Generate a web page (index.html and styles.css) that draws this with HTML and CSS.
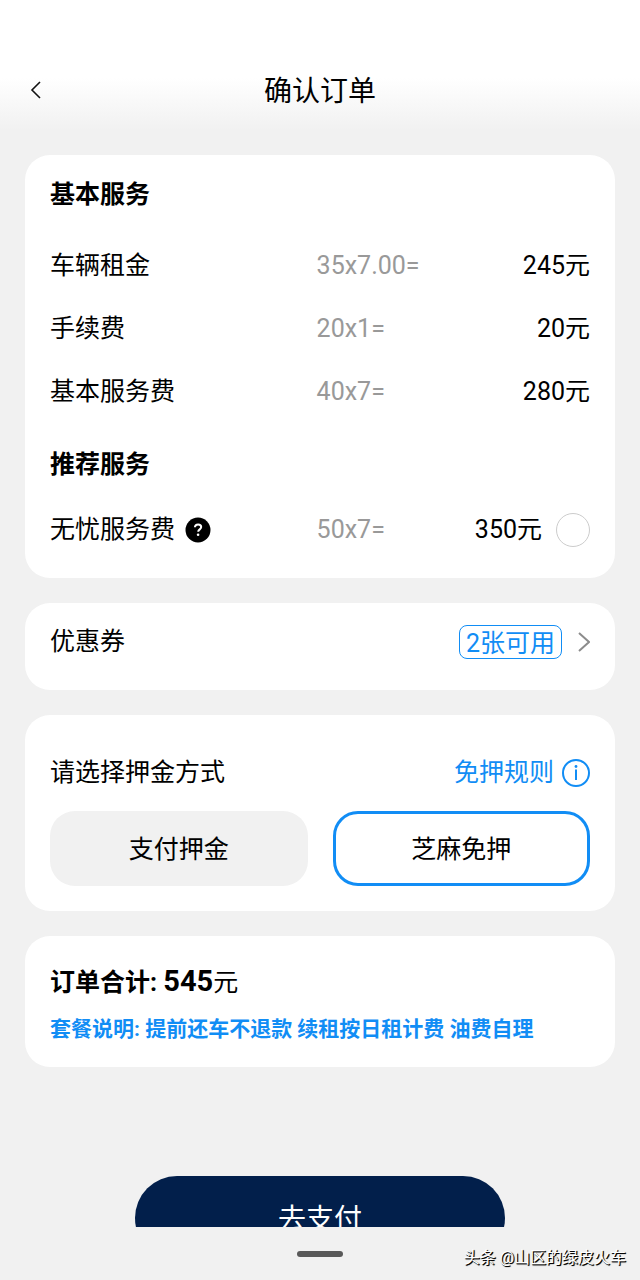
FILE: index.html
```html
<!DOCTYPE html>
<html lang="zh-CN">
<head>
  <meta charset="UTF-8">
  <meta name="viewport" content="width=device-width, initial-scale=1">
  <title>确认订单</title>
  <link rel="stylesheet" href="styles.css">
</head>
<body>
  <header class="header">
    <button class="back" type="button" aria-label="返回">
      <svg width="12" height="18" viewBox="0 0 12 18" fill="none" stroke="#111" stroke-width="1.6"><path d="M10 1 2 9l8 8"/></svg>
    </button>
    <h1>确认订单</h1>
  </header>

  <main class="content">
    <section class="card services">
      <h2>基本服务</h2>
      <table class="fees">
        <tr><th scope="row">车辆租金</th><td class="calc">35x7.00=</td><td class="amount">245元</td></tr>
        <tr><th scope="row">手续费</th><td class="calc">20x1=</td><td class="amount">20元</td></tr>
        <tr><th scope="row">基本服务费</th><td class="calc">40x7=</td><td class="amount">280元</td></tr>
      </table>
      <h2>推荐服务</h2>
      <table class="fees">
        <tr>
          <th scope="row">
            <div class="name">
              无忧服务费
              <button class="help" type="button" aria-label="服务说明">
                <svg width="26" height="26" viewBox="0 0 26 26" fill="none"><circle cx="13" cy="13" r="12.5" fill="#000"/><path d="M9.9 10.3c.1-1.8 1.4-2.9 3.2-2.9s3.1 1.1 3.1 2.7c0 2.3-3 2.3-3 4.7" stroke="#fff" stroke-width="2"/><circle cx="13.1" cy="17.8" r="1.3" fill="#fff"/></svg>
              </button>
            </div>
          </th>
          <td class="calc">50x7=</td>
          <td class="amount">
            <label class="pick">350元<input type="radio" name="care" aria-label="选择无忧服务费"></label>
          </td>
        </tr>
      </table>
    </section>

    <section class="card coupon">
      <span>优惠券</span>
      <a class="coupon-link" href="#">
        <span class="tag">2张可用</span>
        <svg width="14" height="22" viewBox="0 0 14 22" fill="none" stroke="#8c8c8c" stroke-width="2"><path d="m3 2 10 9-10 9"/></svg>
      </a>
    </section>

    <section class="card deposit">
      <div class="deposit-head">
        <span>请选择押金方式</span>
        <a class="rules" href="#">
          免押规则
          <svg width="28" height="28" viewBox="0 0 28 28" fill="none" stroke="#118df5" stroke-width="2"><circle cx="14" cy="14" r="13"/><path d="M14 10.5V21"/><circle cx="14" cy="7.5" r="1.4" fill="#118df5" stroke="none"/></svg>
        </a>
      </div>
      <div class="options">
        <button class="option" type="button">支付押金</button>
        <button class="option selected" type="button">芝麻免押</button>
      </div>
    </section>

    <section class="card total">
      <p class="sum"><b>订单合计: <span class="price">545</span></b>元</p>
      <p class="note">套餐说明: 提前还车不退款 续租按日租计费 油费自理</p>
    </section>

    <button class="pay" type="button">去支付</button>
  </main>

  <footer class="navbar">
    <span class="handle"></span>
    <span class="watermark">头条 @山区的绿皮火车</span>
  </footer>
</body>
</html>
```
FILE: styles.css
```css
* {
  box-sizing: border-box;
}

body {
  margin: 0;
  height: 100vh;
  display: flex;
  flex-direction: column;
  overflow: hidden;
  background: #f1f1f1;
  color: #000;
  font-family: Roboto, "Noto Sans CJK SC", sans-serif;
  font-size: 25px;
  line-height: 36px;
}

button {
  font: inherit;
  color: inherit;
  border: none;
  padding: 0;
  background: none;
  cursor: pointer;
}

a {
  color: #118df5;
  text-decoration: none;
}

svg {
  display: block;
}

.header {
  flex: none;
  display: grid;
  grid-template-columns: 60px 1fr 60px;
  align-items: center;
  padding-top: 70px;
  padding-bottom: 20px;
  background: linear-gradient(#fff 60%, #f1f1f1 100%);
}

.back {
  display: flex;
  justify-content: flex-end;
  padding: 10px 18px;
}

h1 {
  margin: 0;
  padding-top: 4px;
  font-size: 28px;
  font-weight: 400;
  line-height: 36px;
  text-align: center;
}

.content {
  flex: 1;
  min-height: 0;
  overflow: hidden;
  display: flex;
  flex-direction: column;
  gap: 25px;
  padding: 25px 25px 0;
}

.card {
  flex: none;
  padding: 25px;
  border-radius: 25px;
  background: #fff;
}

.services {
  padding-top: 20px;
  padding-bottom: 17px;
}

h2 {
  margin: 0 0 19px;
  font-size: 25px;
  font-weight: 700;
  line-height: 40px;
}

.fees {
  width: 100%;
  table-layout: fixed;
  border-collapse: collapse;
}

.fees + h2 {
  margin-top: 22px;
  margin-bottom: 13px;
}

.fees th,
.fees td {
  height: 63px;
  padding: 0;
  font-weight: 400;
  text-align: left;
}

.fees th {
  width: 49%;
}

.fees .calc {
  padding-left: 2px;
  color: #999;
}

.fees .amount {
  text-align: right;
}

.name,
.pick {
  display: flex;
  align-items: center;
  gap: 10px;
}

.pick {
  justify-content: flex-end;
  gap: 14px;
}

.pick input {
  appearance: none;
  width: 34px;
  height: 34px;
  margin: 0;
  border: 1px solid #ccc;
  border-radius: 50%;
}

.pick input:checked {
  border: 10px solid #118df5;
}

.coupon,
.coupon-link,
.deposit-head,
.rules {
  display: flex;
  align-items: center;
}

.coupon,
.deposit-head {
  justify-content: space-between;
}

.coupon {
  padding-top: 21px;
  padding-bottom: 30px;
}

.coupon-link {
  gap: 14px;
}

.tag {
  padding: 3px 6px 0;
  border: 1px solid #118df5;
  border-radius: 8px;
  line-height: 29px;
}

.deposit {
  padding-top: 40px;
}

.rules {
  gap: 8px;
}

.options {
  display: grid;
  grid-template-columns: 1fr 1fr;
  gap: 25px;
  margin-top: 20px;
}

.option {
  height: 75px;
  padding-top: 2px;
  border-radius: 25px;
  background: #f1f1f1;
}

.option.selected {
  border: 3px solid #118df5;
  background: #fff;
}

.total {
  padding-top: 27px;
  padding-bottom: 20px;
}

.total p {
  margin: 0;
}

.price {
  font-size: 29px;
}

.total .note {
  margin-top: 10px;
  color: #118df5;
  font-size: 21px;
  font-weight: 700;
}

.pay {
  flex: none;
  align-self: center;
  width: 370px;
  height: 84px;
  margin-top: 84px;
  padding-top: 4px;
  border-radius: 42px;
  background: #021f4b;
  color: #fff;
  font-size: 28px;
}

.navbar {
  flex: none;
  position: relative;
  display: flex;
  align-items: center;
  justify-content: center;
  height: 53px;
}

.handle {
  width: 46px;
  height: 6px;
  border-radius: 3px;
  background: #595959;
}

.watermark {
  position: absolute;
  right: 14px;
  bottom: 10px;
  color: #fff;
  font-size: 16px;
  line-height: 24px;
  text-shadow: 1px 1px 1px #000, 1px 1px 0 #222;
}
```
